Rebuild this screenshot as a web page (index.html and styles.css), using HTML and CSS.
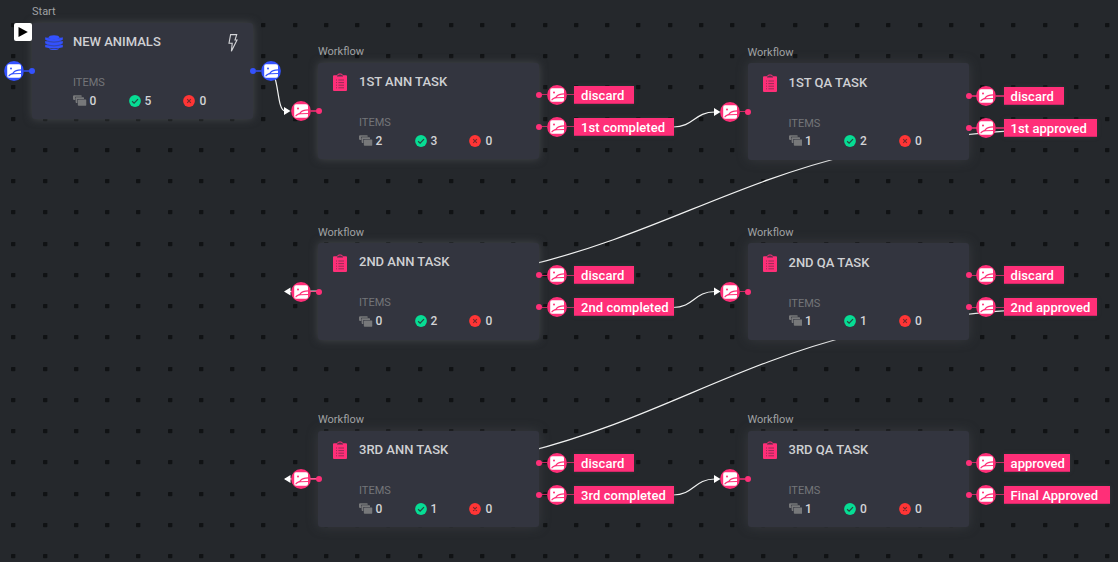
FILE: index.html
```html
<!DOCTYPE html>
<html lang="en">
<head>
<meta charset="utf-8">
<title>Pipeline</title>
<link rel="stylesheet" href="styles.css">
</head>
<body>
<svg class="defs" width="0" height="0">
  <symbol id="port" viewBox="0 0 20 20">
    <circle cx="10" cy="10" r="9.9" fill="currentColor"/>
    <rect x="3.2" y="3.2" width="13.8" height="13.6" rx="1.8" fill="#fff"/>
    <circle cx="7" cy="7.4" r="1" fill="currentColor"/>
    <path d="M4.6 15.2C6.2 12.600 7.8 13.6 9.2 11.8C10.600 9.8 12 8.800 17.4 8.800M8.200 12.8C10.200 12.700 12 12.5 17.4 12.5" fill="none" stroke="currentColor" stroke-width="1.2"/>
  </symbol>
  <symbol id="clipboard" viewBox="0 0 14 18">
    <path d="M1 2.2H3.8L4.6 1.6C5 .2 9 .2 9.4 1.6L10.2 2.2H13Q14 2.2 14 3.2V17Q14 18 13 18H1Q0 18 0 17V3.2Q0 2.2 1 2.2Z" fill="#ff2f78"/>
    <path d="M4 2.6L5.2 2.2L5.8 1.4H8.2L8.8 2.2L10 2.6V3.6H4Z" fill="#54314a"/>
    <path d="M3 7H4M5.4 7H11M3 9.6H4M5.4 9.6H11M3 12.2H4M5.4 12.2H11M3 14.8H4M5.4 14.8H11" stroke="#8c2a54" stroke-width=".9"/>
  </symbol>
  <symbol id="database" viewBox="0 0 18 15">
    <g fill="#3452ff"><ellipse cx="9" cy="2.3" rx="5.2" ry="2"/><path d="M.2 2.2Q9 6.4 17.8 2.2V4.8Q9 8.200 .2 4.8ZM.2 6Q9 9.6 17.8 6V8.600Q9 11.800 .2 8.600ZM.2 9.8Q9 13 17.8 9.8V12.200Q9 15 .2 12.200ZM4 13.400Q9 14.4 14 13.400Q13 15 9 15T4 13.400Z"/><path d="M1.5 2.5H16.5V12H1.5Z" opacity=".6"/></g>
  </symbol>
  <symbol id="bolt" viewBox="0 0 10 18">
    <path d="M2.6.6H8.7L7 6H9L3.4 17.2L4.2 9.2H1Z" fill="none" stroke="#d4d5d8" stroke-width="1.1"/>
  </symbol>
  <symbol id="stack" viewBox="0 0 14 11">
    <g fill="#77787a"><path d="M.8 0H8.4Q9 0 9 .8V1.700H2.300V5H.8L0 4.2V.8ZM3.200 2.2H10.800Q11.400 2.200 11.400 3V4H4.500V8H3.200L2.700 7.3V2.8Z"/><rect x="5" y="4.5" width="9" height="6.4" rx=".9"/></g>
  </symbol>
  <symbol id="ok" viewBox="0 0 12 12">
    <circle cx="6" cy="6" r="5.9" fill="#06dd94"/><path d="M3.1 6.2L5.1 8.1L9 4.2" fill="none" stroke="#254a43" stroke-width="1.2"/>
  </symbol>
  <symbol id="fail" viewBox="0 0 12 12">
    <circle cx="6" cy="6" r="5.9" fill="#ff3535"/><path d="M4.2 4.2L7.8 7.8M7.8 4.2L4.2 7.8" fill="none" stroke="#74282e" stroke-width="1.1"/>
  </symbol>
</svg>

<main class="canvas">
  <svg class="edges" width="1118" height="562" viewBox="0 0 1118 562">
    <g class="wires">
      <path d="M274 75C279 88 278 110 285 111"/>
      <path d="M673 127C694 127 694 112 715 112"/>
      <path d="M673 307.500C694 307.500 694 291.500 715 291.500"/>
      <path d="M673 495C694 495 694 479 715 479"/>
      <path d="M1096 128C691 128 691 291.500 285 291.500"/>
      <path d="M1096 307.500C691 307.500 691 479 285 479"/>
    </g>
    <g class="heads">
      <path d="M284 107L290.500 111L284 115Z"/>
      <path d="M714 108L720.500 112L714 116Z"/>
      <path d="M714 287.500L720.500 291.500L714 295.500Z"/>
      <path d="M714 475L720.500 479L714 483Z"/>
      <path d="M290.500 287.500L284 291.500L290.500 295.500Z"/>
      <path d="M290.500 475L284 479L290.500 483Z"/>
    </g>
  </svg>

  <section class="node start lit at-start">
    <span class="kind">Start</span>
    <span class="play"><svg width="10" height="10" viewBox="0 0 10 10"><path d="M.5 0L9.800 5L.5 10Z"/></svg></span>
    <header class="head"><svg class="icon"><use href="#database"/></svg><h2 class="title">NEW ANIMALS</h2><svg class="bolt"><use href="#bolt"/></svg></header>
    <div class="items"><span class="caption">ITEMS</span>
      <div class="counts"><span class="count"><svg class="stack"><use href="#stack"/></svg>0</span><span class="count"><svg class="state"><use href="#ok"/></svg>5</span><span class="count"><svg class="state"><use href="#fail"/></svg>0</span></div></div>
    <div class="input"><svg class="port"><use href="#port"/></svg><i class="line"></i><i class="dot"></i></div>
    <div class="outputs"><div class="output"><i class="dot"></i><i class="line"></i><svg class="port"><use href="#port"/></svg></div></div>
  </section>

  <section class="node lit at-ann1">
    <span class="kind">Workflow</span>
    <header class="head"><svg class="icon"><use href="#clipboard"/></svg><h2 class="title">1ST ANN TASK</h2></header>
    <div class="items"><span class="caption">ITEMS</span>
      <div class="counts"><span class="count"><svg class="stack"><use href="#stack"/></svg>2</span><span class="count"><svg class="state"><use href="#ok"/></svg>3</span><span class="count"><svg class="state"><use href="#fail"/></svg>0</span></div></div>
    <div class="input"><svg class="port"><use href="#port"/></svg><i class="line"></i><i class="dot"></i></div>
    <div class="outputs">
      <div class="output"><i class="dot"></i><i class="line"></i><svg class="port"><use href="#port"/></svg><i class="line"></i><span class="tag w60">discard</span></div>
      <div class="output"><i class="dot"></i><i class="line"></i><svg class="port"><use href="#port"/></svg><i class="line"></i><span class="tag w100">1st completed</span></div>
    </div>
  </section>

  <section class="node at-qa1">
    <span class="kind">Workflow</span>
    <header class="head"><svg class="icon"><use href="#clipboard"/></svg><h2 class="title">1ST QA TASK</h2></header>
    <div class="items"><span class="caption">ITEMS</span>
      <div class="counts"><span class="count"><svg class="stack"><use href="#stack"/></svg>1</span><span class="count"><svg class="state"><use href="#ok"/></svg>2</span><span class="count"><svg class="state"><use href="#fail"/></svg>0</span></div></div>
    <div class="input"><svg class="port"><use href="#port"/></svg><i class="line"></i><i class="dot"></i></div>
    <div class="outputs">
      <div class="output"><i class="dot"></i><i class="line"></i><svg class="port"><use href="#port"/></svg><i class="line"></i><span class="tag w60">discard</span></div>
      <div class="output"><i class="dot"></i><i class="line"></i><svg class="port"><use href="#port"/></svg><i class="line"></i><span class="tag w93">1st approved</span></div>
    </div>
  </section>

  <section class="node lit at-ann2">
    <span class="kind">Workflow</span>
    <header class="head"><svg class="icon"><use href="#clipboard"/></svg><h2 class="title">2ND ANN TASK</h2></header>
    <div class="items"><span class="caption">ITEMS</span>
      <div class="counts"><span class="count"><svg class="stack"><use href="#stack"/></svg>0</span><span class="count"><svg class="state"><use href="#ok"/></svg>2</span><span class="count"><svg class="state"><use href="#fail"/></svg>0</span></div></div>
    <div class="input"><svg class="port"><use href="#port"/></svg><i class="line"></i><i class="dot"></i></div>
    <div class="outputs">
      <div class="output"><i class="dot"></i><i class="line"></i><svg class="port"><use href="#port"/></svg><i class="line"></i><span class="tag w60">discard</span></div>
      <div class="output"><i class="dot"></i><i class="line"></i><svg class="port"><use href="#port"/></svg><i class="line"></i><span class="tag w100">2nd completed</span></div>
    </div>
  </section>

  <section class="node at-qa2">
    <span class="kind">Workflow</span>
    <header class="head"><svg class="icon"><use href="#clipboard"/></svg><h2 class="title">2ND QA TASK</h2></header>
    <div class="items"><span class="caption">ITEMS</span>
      <div class="counts"><span class="count"><svg class="stack"><use href="#stack"/></svg>1</span><span class="count"><svg class="state"><use href="#ok"/></svg>1</span><span class="count"><svg class="state"><use href="#fail"/></svg>0</span></div></div>
    <div class="input"><svg class="port"><use href="#port"/></svg><i class="line"></i><i class="dot"></i></div>
    <div class="outputs">
      <div class="output"><i class="dot"></i><i class="line"></i><svg class="port"><use href="#port"/></svg><i class="line"></i><span class="tag w60">discard</span></div>
      <div class="output"><i class="dot"></i><i class="line"></i><svg class="port"><use href="#port"/></svg><i class="line"></i><span class="tag w93">2nd approved</span></div>
    </div>
  </section>

  <section class="node at-ann3">
    <span class="kind">Workflow</span>
    <header class="head"><svg class="icon"><use href="#clipboard"/></svg><h2 class="title">3RD ANN TASK</h2></header>
    <div class="items"><span class="caption">ITEMS</span>
      <div class="counts"><span class="count"><svg class="stack"><use href="#stack"/></svg>0</span><span class="count"><svg class="state"><use href="#ok"/></svg>1</span><span class="count"><svg class="state"><use href="#fail"/></svg>0</span></div></div>
    <div class="input"><svg class="port"><use href="#port"/></svg><i class="line"></i><i class="dot"></i></div>
    <div class="outputs">
      <div class="output"><i class="dot"></i><i class="line"></i><svg class="port"><use href="#port"/></svg><i class="line"></i><span class="tag w60">discard</span></div>
      <div class="output"><i class="dot"></i><i class="line"></i><svg class="port"><use href="#port"/></svg><i class="line"></i><span class="tag w100">3rd completed</span></div>
    </div>
  </section>

  <section class="node at-qa3">
    <span class="kind">Workflow</span>
    <header class="head"><svg class="icon"><use href="#clipboard"/></svg><h2 class="title">3RD QA TASK</h2></header>
    <div class="items"><span class="caption">ITEMS</span>
      <div class="counts"><span class="count"><svg class="stack"><use href="#stack"/></svg>1</span><span class="count"><svg class="state"><use href="#ok"/></svg>0</span><span class="count"><svg class="state"><use href="#fail"/></svg>0</span></div></div>
    <div class="input"><svg class="port"><use href="#port"/></svg><i class="line"></i><i class="dot"></i></div>
    <div class="outputs">
      <div class="output"><i class="dot"></i><i class="line"></i><svg class="port"><use href="#port"/></svg><i class="line"></i><span class="tag w66">approved</span></div>
      <div class="output"><i class="dot"></i><i class="line"></i><svg class="port"><use href="#port"/></svg><i class="line"></i><span class="tag w106">Final Approved</span></div>
    </div>
  </section>
</main>
</body>
</html>
```
FILE: styles.css
```css
* { box-sizing: border-box; }
body { margin: 0; background: #25282c; font-family: Roboto, sans-serif; overflow: hidden; }
.defs { position: absolute; }
.canvas {
  position: relative;
  width: 1118px;
  height: 562px;
  overflow: hidden;
  background-image: url("data:image/svg+xml,%3Csvg xmlns='http://www.w3.org/2000/svg' width='31.25' height='31.25'%3E%3Crect width='4.3' height='4.1' rx='.6' fill='%23101214'/%3E%3C/svg%3E");
  background-size: 31.25px 31.25px;
  background-position: 11.400px 23px;
}
.edges { position: absolute; left: 0; top: 0; }
.wires { fill: none; stroke: #f1f2f2; stroke-width: 1.2; }
.heads { fill: #fff; }

.node {
  position: absolute;
  width: 221.400px;
  height: 96.500px;
  padding: 11px 15px 0;
  border-radius: 3px;
  background: #33353f;
  box-shadow: 0 0 12px rgba(83, 86, 91, .4);
  color: #ff2f78;
}
.node.lit { box-shadow: 0 0 9px rgba(90, 92, 95, .6); }
.node.start { color: #3452ff; }
.at-start { left: 32px; top: 22.500px; }
.at-ann1 { left: 318px; top: 62.500px; }
.at-qa1 { left: 747.500px; top: 63px; }
.at-ann2 { left: 318px; top: 243px; }
.at-qa2 { left: 747.500px; top: 243px; }
.at-ann3 { left: 318px; top: 430.500px; }
.at-qa3 { left: 747.500px; top: 430.500px; }

.kind { position: absolute; left: 0; top: -18px; font-size: 11px; line-height: 14px; color: #a0a2a4; }
.start .kind, .at-ann2 .kind { top: -17.500px; }
.at-qa1 .kind, .at-qa2 .kind { top: -17.500px; }
.at-qa1 .title, .at-qa2 .title { padding-top: 1px; }
.play {
  position: absolute; left: -18px; top: .5px; width: 18px; height: 18px;
  display: flex; align-items: center; justify-content: center;
  background: #fff; border-radius: 2px;
}
.head { display: flex; align-items: flex-start; height: 41px; }
.icon { width: 14px; height: 18px; margin: -.5px 12px 0 0; flex: none; }
.start .icon { width: 18px; height: 15px; margin: 1px 10px 0 -2px; }
.title { margin: 0; font-size: 13px; line-height: 16px; font-weight: 500; color: #cfd0d3; flex: 1; }
.bolt { width: 10px; height: 18px; }
.items { padding: 1px 0 0 26px; }
.caption { display: block; font-size: 11px; line-height: 14px; color: #737579; }
.counts { display: flex; margin-top: 3px; }
.at-qa1 .caption, .at-qa2 .caption { padding-top: .5px; }
.at-qa1 .counts, .at-qa2 .counts { margin-top: 2px; }
.count { display: flex; align-items: center; width: 55.300px; height: 16px; font-size: 12px; line-height: 16px; font-weight: 500; color: #d3d4d7; gap: 4px; }
.stack { width: 13.500px; height: 11px; margin-right: -1px; }
.state { width: 12px; height: 12px; }
.count:nth-child(1) { width: 56px; }

.input, .output { display: flex; align-items: center; height: 20px; }
.input { position: absolute; left: -27.500px; top: 38.500px; }
.start .input { left: -28px; }
.outputs { position: absolute; left: 218.200px; top: 22.300px; display: flex; flex-direction: column; gap: 12px; }
.at-qa1 .outputs { top: 23px; }
.start .outputs { top: 38.500px; }
.dot { width: 6px; height: 6px; border-radius: 50%; background: currentColor; flex: none; }
.port { width: 20px; height: 20px; flex: none; }
.line { width: 5px; height: 1.400px; background: currentColor; opacity: .72; }
.output .dot + .line { width: 5.300px; margin-right: -.900px; }
.output .port + .line { width: 8px; margin-right: -.3px; }
.tag { height: 18px; padding-left: 6.800px; background: #ff2f78; color: #fff; font-size: 13px; line-height: 19px; font-weight: 500; letter-spacing: .05px; white-space: nowrap; box-shadow: 0 0 4px rgba(70, 72, 76, .4), inset 0 -1px rgba(80, 20, 60, .25); }
.w60 { width: 60px; }
.w66 { width: 66px; }
.w93 { width: 93px; }
.w100 { width: 100px; }
.w106 { width: 106px; }
```
